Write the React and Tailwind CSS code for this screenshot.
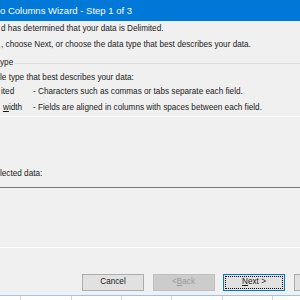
import React from "react";

const gridCols = [51, 50, 50, 51, 50, 50];

const WizardButton = ({ children, variant = "default" }) => {
  if (variant === "disabled") {
    return (
      <div className="w-[62px] h-[17px] shrink-0 flex items-center justify-center bg-[#cccccc] border border-[#bfbfbf] text-[#9a9a9a]">
        {children}
      </div>
    );
  }
  if (variant === "focused") {
    return (
      <div className="w-[62px] h-[17px] shrink-0 p-[1px] bg-[#e1e1e1] border-[1.5px] border-[#0078d7]">
        <div className="w-full h-full flex items-center justify-center border border-dotted border-black">
          {children}
        </div>
      </div>
    );
  }
  return (
    <div className="w-[62px] h-[17px] shrink-0 flex items-center justify-center bg-[#e1e1e1] border border-[#adadad]">
      {children}
    </div>
  );
};

export default function App() {
  return (
    <div className="w-[300px] h-[300px] overflow-hidden bg-[#f0f0f0] flex flex-col font-['Liberation_Sans',Arial,sans-serif] text-[8.2px] text-[#1a1a1a] whitespace-nowrap">
      {/* title bar */}
      <div className="h-[21px] shrink-0 bg-[#0078d7] text-white text-[9.5px] leading-[21px]">
        o Columns Wizard - Step 1 of 3
      </div>

      <p className="h-[16px] leading-[16px] pl-[1px]">d has determined that your data is Delimited.</p>
      <p className="h-[16px] leading-[16px] pl-[1px]">, choose Next, or choose the data type that best describes your data.</p>

      {/* original data type group */}
      <div className="mt-[2px] h-[16px] flex items-center">
        <span className="leading-[16px]">ype</span>
        <div className="flex-1 h-px bg-[#dcdcdc] ml-[2px]" />
      </div>
      <p className="mt-[1px] h-[12px] leading-[12px]">le type that best describes your data:</p>
      <div className="h-[16px] leading-[16px] flex">
        <span className="w-[33px] pl-[1px]">ited</span>
        <span>- Characters such as commas or tabs separate each field.</span>
      </div>
      <div className="h-[16px] leading-[16px] flex">
        <span className="w-[33px] pl-[3px]">
          <span className="underline">w</span>idth
        </span>
        <span>- Fields are aligned in columns with spaces between each field.</span>
      </div>
      <div className="h-px bg-[#fafafa]" />

      <p className="mt-[49px] h-[16px] leading-[16px]">lected data:</p>
      <div className="mt-[5px] h-px bg-[#777777]" />

      <div className="mt-[59px] h-px bg-white" />

      {/* buttons */}
      <div className="mt-[26px] flex gap-[8.5px] pl-[82px]">
        <WizardButton>Cancel</WizardButton>
        <WizardButton variant="disabled">
          &lt; <span className="underline">B</span>ack
        </WizardButton>
        <WizardButton variant="focused">
          <span className="underline">N</span>ext &gt;
        </WizardButton>
        <WizardButton />
      </div>

      <div className="mt-[4px] h-px bg-[#9cc3e6]" />
      {/* sheet behind the dialog */}
      <div className="flex-1 flex bg-white">
        <div className="w-[20px] shrink-0" />
        {gridCols.map((w, i) => (
          <div
            key={i}
            className={`shrink-0 border-l border-[#d4d4d4] ${w === 51 ? "w-[51px]" : "w-[50px]"}`}
          />
        ))}
      </div>
    </div>
  );
}
